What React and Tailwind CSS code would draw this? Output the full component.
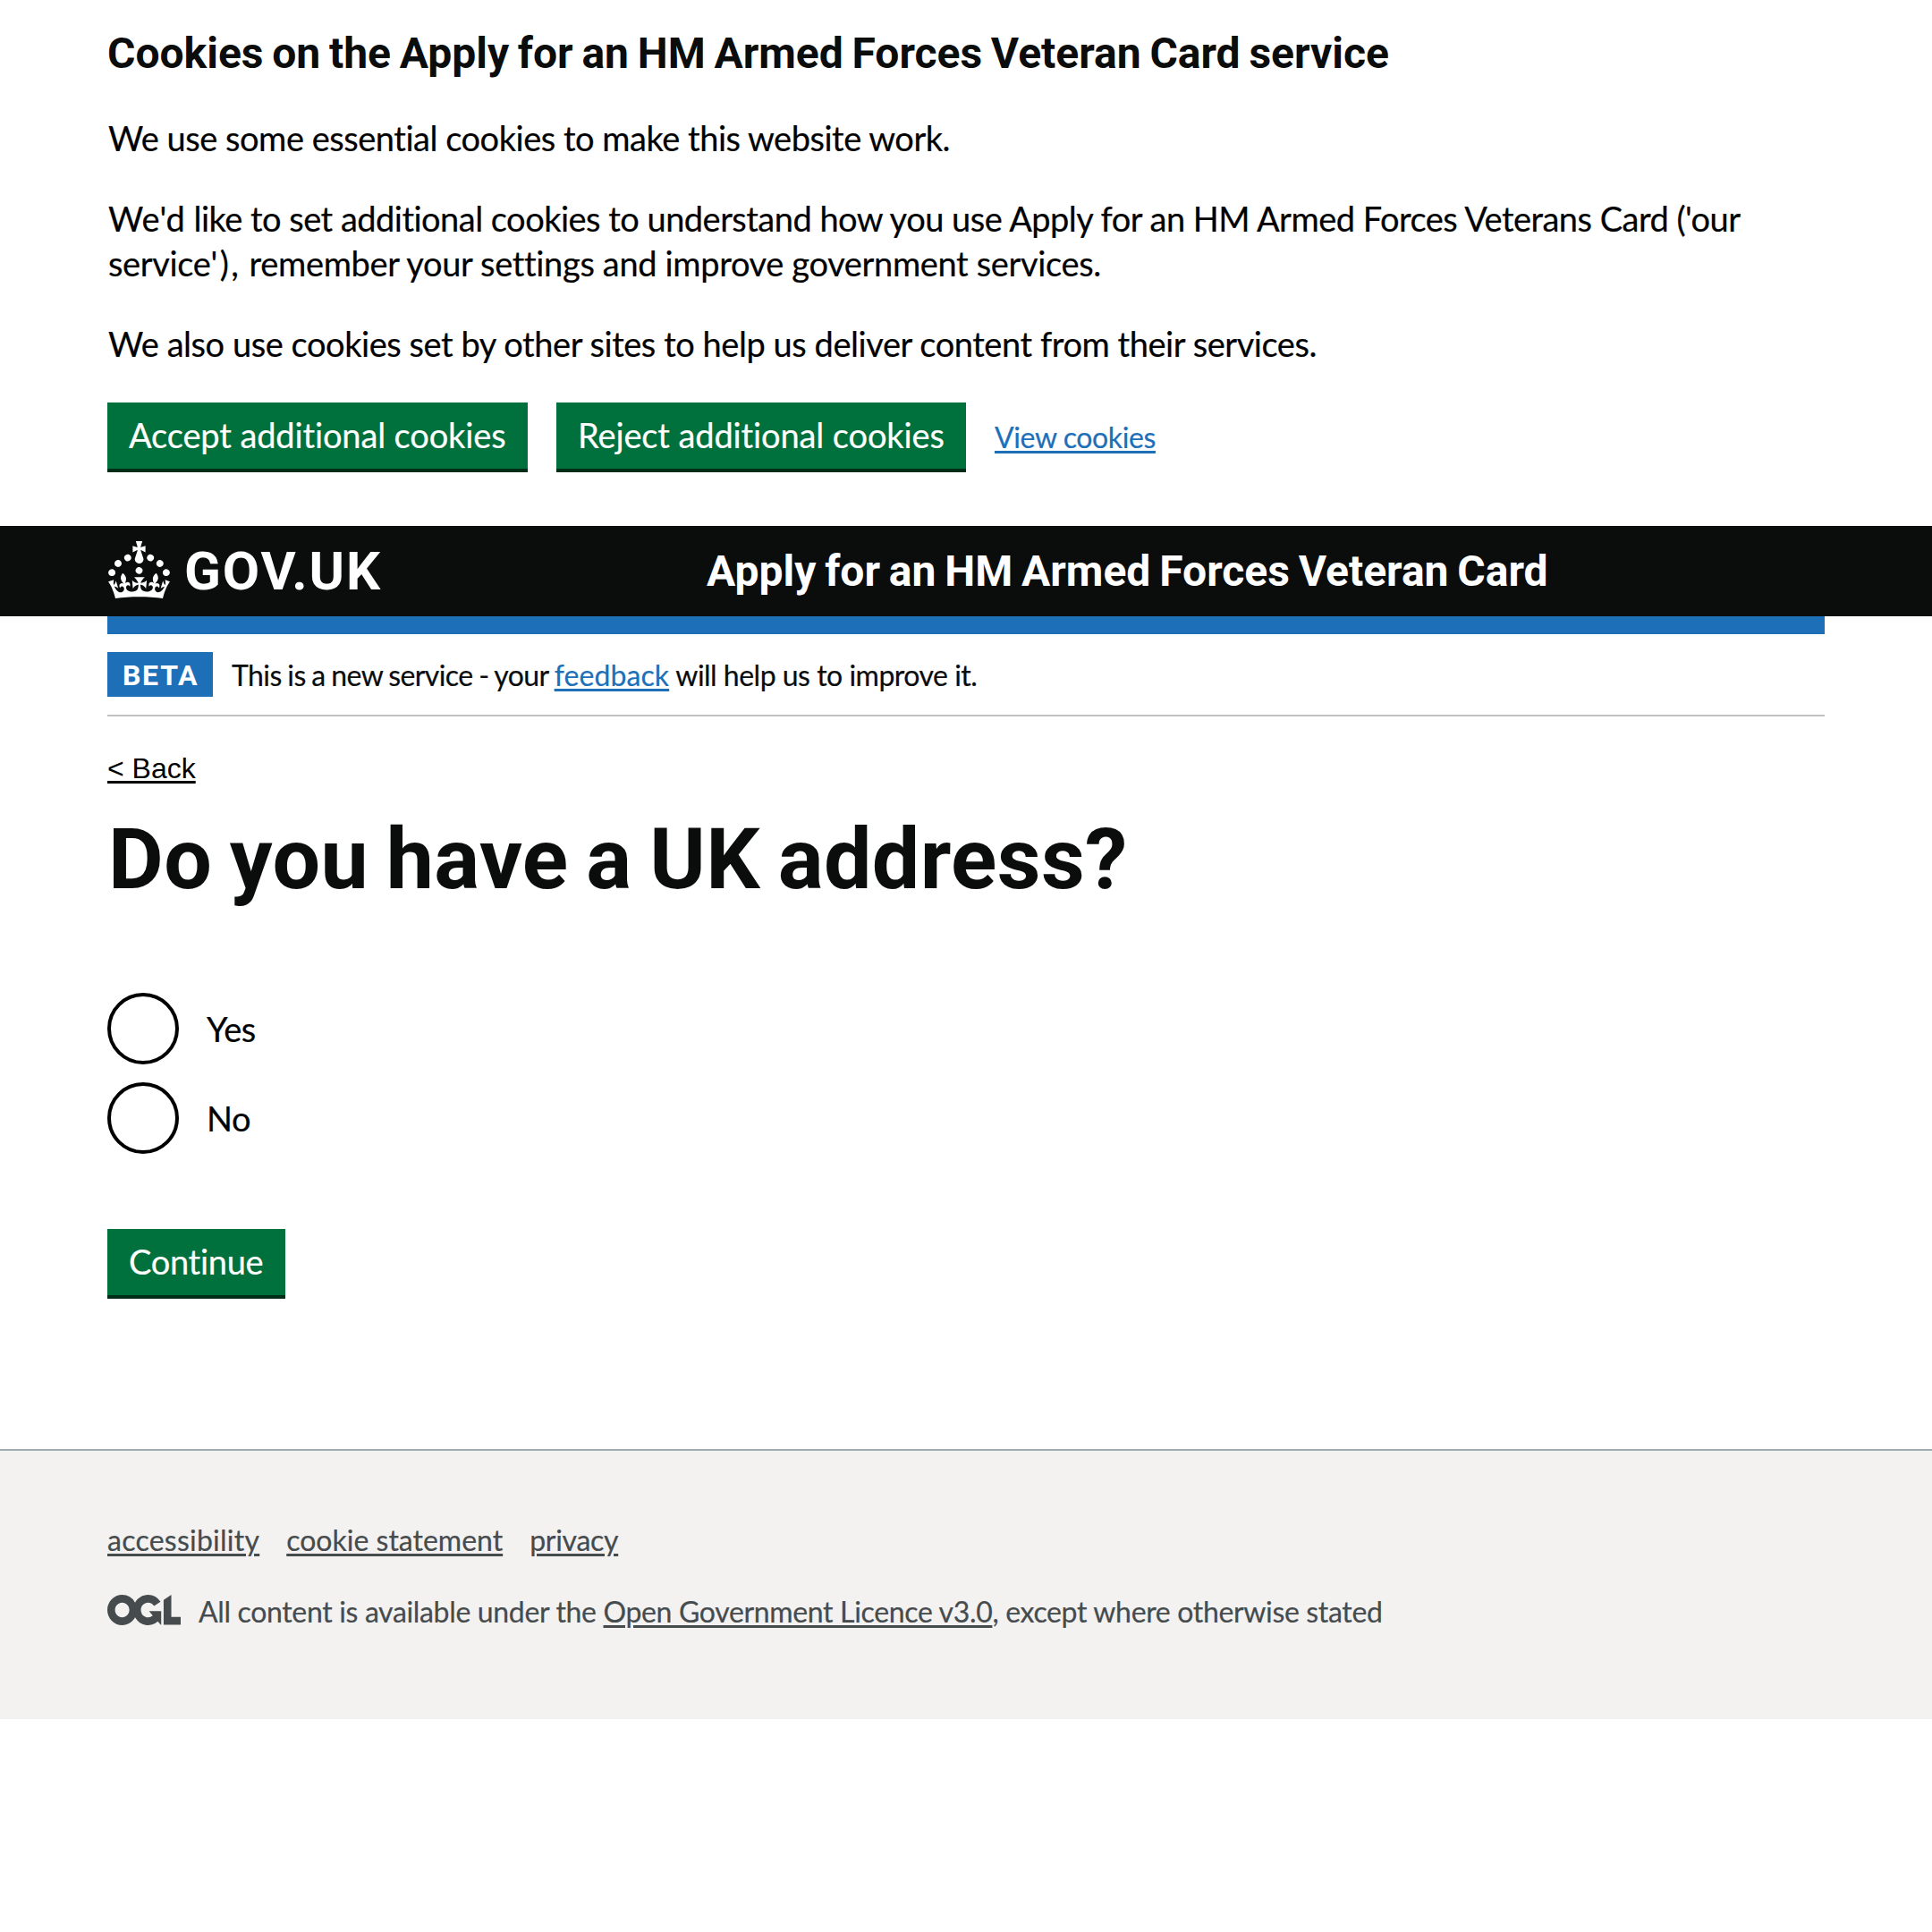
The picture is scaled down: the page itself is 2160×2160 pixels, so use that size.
const LINK = "underline decoration-[3px] underline-offset-[3px]";
const BOLD = "font-['Roboto','Noto_Sans',sans-serif] font-bold [-webkit-text-stroke:0px]";

function Crown() {
  return (
    <svg className="h-[64px] w-[69px] shrink-0" viewBox="0 0 32 30" preserveAspectRatio="none" fill="currentColor" aria-hidden="true">
      <path d="M22.6 10.4c-1 .4-2-.1-2.4-1-.4-.9.1-2 1-2.4.9-.4 2 .1 2.4 1s-.1 2-1 2.4m-5.9 6.7c-.9.4-2-.1-2.4-1-.4-.9.1-2 1-2.4.9-.4 2 .1 2.4 1s-.1 2-1 2.4m10.8-3.7c-1 .4-2-.1-2.4-1-.4-.9.1-2 1-2.4.9-.4 2 .1 2.4 1s0 2-1 2.4m3.3 4.8c-1 .4-2-.1-2.4-1-.4-.9.1-2 1-2.4.9-.4 2 .1 2.4 1s-.1 2-1 2.4M17 4.7l2.3 1.2V2.5l-2.3.7-.2-.2.9-3h-3.4l.9 3-.2.2c-.1.1-2.3-.7-2.3-.7v3.4L15 4.7c.1.1.1.2.2.2l-1.3 4c-.1.2-.1.4-.1.6 0 1.1.8 2 1.9 2.2h.7c1-.2 1.9-1.1 1.9-2.1 0-.2 0-.4-.1-.6l-1.3-4c-.1-.2 0-.2.1-.3m-7.6 5.7c.9.4 2-.1 2.4-1 .4-.9-.1-2-1-2.4-.9-.4-2 .1-2.4 1s0 2 1 2.4m-5 3c.9.4 2-.1 2.4-1 .4-.9-.1-2-1-2.4-.9-.4-2 .1-2.4 1s.1 2 1 2.4m-3.2 4.8c.9.4 2-.1 2.4-1 .4-.9-.1-2-1-2.4-.9-.4-2 .1-2.4 1s0 2 1 2.4m14.8 11c4.4 0 8.6.3 12.3.8 1.1-4.5 2.4-7 3.7-8.8l-2.5-.9c.2 1.3.3 1.9 0 2.7-.4-.4-.8-1.1-1.1-2.3l-1.2 4c.7-.5 1.3-.8 2-.9-1.1 2.5-2.6 3.1-3.5 3-1.1-.2-1.7-1.2-1.5-2.1.3-1.2 1.5-1.5 2.1-.1 1.1-2.3-.8-3-2-2.3 1.9-1.9 2.1-3.5.6-5.6-2.1 1.6-2.1 3.2-1.2 5.5-1.2-1.4-3.2-.6-2.5 1.6.9-1.4 2.1-.5 1.9.8-.2 1.1-1.7 2.1-3.5 1.9-2.7-.2-2.9-2.1-2.9-3.6.7-.1 1.9.5 2.9 1.9l.4-4.3c-1.1 1.1-2.1 1.4-3.2 1.4.4-1.2 2.1-3 2.1-3h-5.4s1.7 1.9 2.1 3c-1.1 0-2.1-.2-3.2-1.4l.4 4.3c1-1.4 2.2-2 2.9-1.9-.1 1.5-.2 3.4-2.9 3.6-1.9.2-3.4-.8-3.5-1.9-.2-1.3 1-2.2 1.9-.8.7-2.3-1.2-3-2.5-1.6.9-2.2.9-3.9-1.2-5.5-1.5 2-1.3 3.7.6 5.6-1.2-.7-3.1 0-2 2.3.6-1.4 1.8-1.1 2.1.1.2.9-.3 1.9-1.5 2.1-.9.2-2.4-.5-3.5-3 .6 0 1.2.3 2 .9l-1.2-4c-.3 1.1-.7 1.9-1.1 2.3-.3-.8-.2-1.4 0-2.7l-2.9.9C1.3 23 2.6 25.5 3.7 30c3.7-.5 7.9-.8 12.3-.8" />
    </svg>
  );
}

function OglLogo() {
  return (
    <svg className="mt-px mr-[20px] h-[34px] w-[82px] shrink-0" viewBox="0 0 483.2 195.7" preserveAspectRatio="none" fill="currentColor" aria-hidden="true">
      <path d="M421.5 142.8V.1l-50.7 32.3v161.1h112.4v-50.7zm-122.3-9.6A47.12 47.12 0 0 1 221 97.8c0-26 21.1-47.1 47.1-47.1 16.7 0 31.4 8.7 39.7 21.8l42.7-27.2A97.63 97.63 0 0 0 268.1 0c-36.5 0-68.3 20.1-85.1 49.7A98 98 0 0 0 97.8 0C43.9 0 0 43.9 0 97.8s43.9 97.8 97.8 97.8c36.5 0 68.3-20.1 85.1-49.7a97.76 97.76 0 0 0 149.6 25.4l19.4 22.2h3v-87.8h-80l24.3 27.5zM97.8 145c-26 0-47.1-21.1-47.1-47.1s21.1-47.1 47.1-47.1 47.1 21.1 47.1 47.1S123.8 145 97.8 145" />
    </svg>
  );
}

function Button({ className, children }) {
  return (
    <button
      type="button"
      className={`mb-1 block h-[74px] bg-[#00703c] px-6 pt-[17px] pb-[19px] text-left text-[38px] leading-[38px] whitespace-nowrap text-white shadow-[0_4px_0_#002d18] ${className}`}
    >
      {children}
    </button>
  );
}

function Radio({ label }) {
  return (
    <label className="flex h-20 items-start">
      <span className="h-20 w-20 rounded-full border-4 border-black" />
      <span className="mt-[15px] ml-[31px] text-[38px] leading-[50px] tracking-[-0.4px] text-black">{label}</span>
    </label>
  );
}

export default function App() {
  return (
    <div className="min-h-[2160px] bg-white font-['Lato','Noto_Sans',sans-serif] text-[#0b0c0c] [-webkit-text-stroke:0.2px] [font-variant-ligatures:none]">
      <section className="mx-[120px] h-[588px] pt-[30px]">
        <h2 className={`mb-[39px] text-[48px] leading-[60px] [word-spacing:-2.2px] whitespace-nowrap ${BOLD}`}>
          Cookies on the Apply for an HM Armed Forces Veteran Card service
        </h2>
        <div className="pl-px text-[38px] leading-[50px] whitespace-nowrap text-black">
          <p className="mb-10 tracking-[-0.48px]">We use some essential cookies to make this website work.</p>
          <p className="mb-10">
            <span className="tracking-[-0.52px]">
              <span className="tracking-[0.4px]">We'd</span> like to set additional cookies to understand how you use Apply for an HM Armed Forces Veterans Card ('our
            </span>
            <br />
            <span className="tracking-[-0.35px]">
              service<span className="tracking-[2.4px]">'),</span> remember your settings and improve government services.
            </span>
          </p>
          <p className="tracking-[-0.45px]">
            We also use cookies set by other sites to help us deliver content from their services.
          </p>
        </div>
        <div className="mt-[41px] flex items-start">
          <Button className="mr-8 w-[470px] tracking-[-0.13px]">Accept additional cookies</Button>
          <Button className="mr-8 w-[458px] tracking-[-0.12px]">Reject additional cookies</Button>
          <a className={`mt-[19px] text-[32px] leading-[40px] tracking-[-0.4px] text-[#1d70b8] ${LINK}`}>View cookies</a>
        </div>
      </section>

      <header className={`flex h-[101px] items-start bg-[#0b0c0c] pl-[121px] whitespace-nowrap text-white ${BOLD}`}>
        <div className="mr-[16px] pt-[17px]">
          <Crown />
        </div>
        <div className="mt-[21px] w-[584px] text-[60px] leading-[60px] tracking-[1.9px]">GOV.UK</div>
        <div className="mt-[21px] text-[48px] leading-[60px] [word-spacing:-2.1px]">
          Apply for an HM Armed Forces Veteran Card
        </div>
      </header>

      <main className="mx-[120px] h-[931px]">
        <div className="h-5 bg-[#1d70b8]" />
        <div className="flex h-[92px] items-start border-b-2 border-[#bfc1c3] pt-5 text-[32px] leading-[50px] whitespace-nowrap">
          <strong className={`mr-[21px] h-[50px] w-[118px] bg-[#1d70b8] pt-px pl-[17px] tracking-[1.7px] text-white ${BOLD}`}>BETA</strong>
          <span className="pt-px tracking-[-0.5px]">
            <span className="tracking-[-0.58px] [word-spacing:-1px]">This is a new service - your </span>
            <a className={`tracking-[0.1px] text-[#1d70b8] ${LINK}`}>feedback</a> will help us to improve it.
          </span>
        </div>
        <a className={`mt-[38px] block w-fit font-['Liberation_Sans'] text-[32px] leading-[40px] text-black [-webkit-text-stroke:0px] ${LINK}`}>&lt; Back</a>
        <h1 className={`mt-[32px] ml-px text-[95px] leading-[100px] tracking-[0.4px] [word-spacing:-4.3px] whitespace-nowrap ${BOLD}`}>
          Do you have a UK address?
        </h1>
        <div className="mt-[99px] flex flex-col gap-5">
          <Radio label="Yes" />
          <Radio label="No" />
        </div>
        <Button className="mt-[84px] w-[199px] tracking-[-0.3px]">Continue</Button>
      </main>

      <footer className="h-[302px] border-t-2 border-[#a1acb2] bg-[#f3f2f1] px-[120px] pt-[80px] text-[32px] leading-[40px] whitespace-nowrap text-[#464b4d]">
        <nav className="flex gap-[30px]">
          <a className={`tracking-[0.25px] ${LINK}`}>accessibility</a>
          <a className={LINK}>cookie statement</a>
          <a className={`tracking-[-0.3px] ${LINK}`}>privacy</a>
        </nav>
        <div className="mt-10 flex items-start">
          <OglLogo />
          <p className="tracking-[-0.34px]">
            All content is available under the <a className={LINK}>Open Government Licence v3.0</a>, except where otherwise stated
          </p>
        </div>
      </footer>
    </div>
  );
}
